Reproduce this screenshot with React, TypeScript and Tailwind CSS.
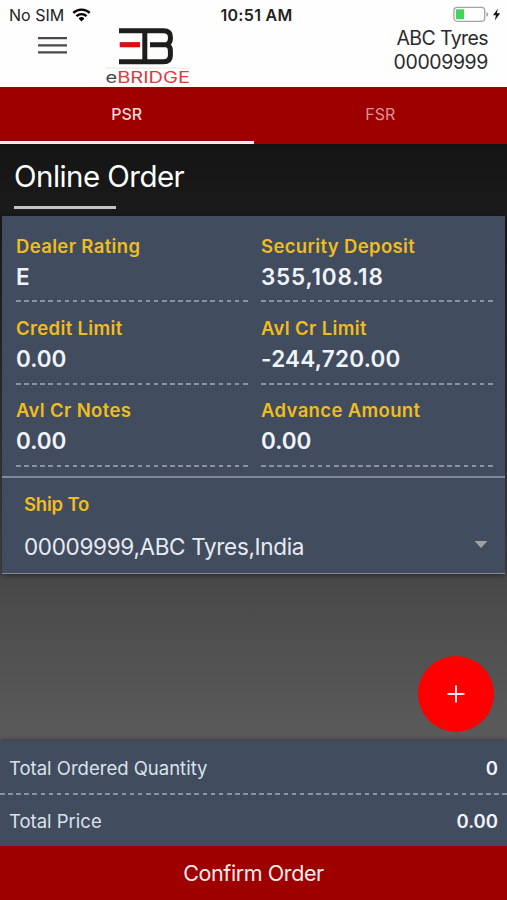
import clsx from "clsx";

interface Field {
    label: string;
    value: string;
    className?: string;
}

const accountFields: Field[] = [
    { label: "Dealer Rating", value: "E" },
    { label: "Security Deposit", value: "355,108.18", className: "tracking-[0.8px]" },
    { label: "Credit Limit", value: "0.00" },
    { label: "Avl Cr Limit", value: "-244,720.00", className: "tracking-[0.25px]" },
    { label: "Avl Cr Notes", value: "0.00" },
    { label: "Advance Amount", value: "0.00" },
];

function DashedLine({ className }: { className?: string }) {
    return (
        <div
            className={clsx(
                "h-[2px] bg-[repeating-linear-gradient(90deg,#8a93a1_0_4.7px,transparent_4.7px_8.1px)]",
                className
            )}
        />
    );
}

function StatusBar() {
    return (
        <div className="grid h-[29px] grid-cols-3 items-center pl-[9px] pr-[6px] pt-px text-[#222]">
            <div className="flex items-center gap-[8px]">
                <span className="text-[16px] leading-[28px]">No SIM</span>
                <svg width="19" height="14" viewBox="0 0 20 15" fill="none" stroke="#000" strokeWidth="2.6">
                    <path d="M1.2 5.3a12.6 12.6 0 0 1 17.6 0" />
                    <path d="M4.6 8.7a7.8 7.8 0 0 1 10.8 0" />
                    <path d="M10 14.4 6.9 11.2a4.5 4.5 0 0 1 6.2 0Z" fill="#000" stroke="none" />
                </svg>
            </div>
            <div className="whitespace-nowrap pl-[3px] text-center text-[16px] font-semibold leading-[28px] tracking-[0.3px]">
                10:51 AM
            </div>
            <div className="-mt-px flex items-center justify-end">
                <svg width="48" height="17" viewBox="0 0 48 17">
                    <rect x="0.9" y="1.3" width="30.8" height="14" rx="3.2" fill="#fff" stroke="#a3a3a3" strokeWidth="1.3" />
                    <rect x="2.9" y="3.3" width="8.2" height="10" rx="0.8" fill="#44d35f" />
                    <path d="M33.4 6v4.8c1.1-.4 1.8-1.3 1.8-2.4s-.7-2-1.8-2.4Z" fill="#a3a3a3" />
                    <path d="M45 2.4 40 9.2h3l-1.2 5.3 5.4-7.3h-3.4Z" fill="#111" />
                </svg>
            </div>
        </div>
    );
}

function Logo() {
    return (
        <svg className="h-[60px] w-[86px]" viewBox="0 0 86 60" fill="none">
            <g stroke="#1d1d1b" strokeWidth="5">
                <path d="M14 4.8H58.500q6.900 0 6.900 6.200v2q0 3.600-3.400 5.700H45" />
                <path d="M62 18.700q3.400 2.100 3.400 5.700v5.200q0 6.200-6.900 6.200H14" />
                <path d="M39.8 4v32" />
            </g>
            <path d="M14.7 18.7H35" stroke="#dc0d10" strokeWidth="5.2" />
            <path d="M0 42h85" stroke="#e8e4e2" strokeWidth="1" />
            {/* Wordmark */}
            <text
                x="0.5"
                y="56.9"
                fontFamily="Inter, sans-serif"
                fontSize="15.5"
                fontWeight="400"
                textLength="84.5"
                lengthAdjust="spacingAndGlyphs"
            >
                <tspan fill="#444">e</tspan>
                <tspan fill="#dc3a40">BRIDGE</tspan>
            </text>
        </svg>
    );
}

function Header() {
    return (
        <header className="h-[87px] bg-[#fefefe]">
            <StatusBar />
            <div className="flex h-[58px] items-start justify-between pl-[38px] pr-[19px]">
                <div className="flex items-start">
                    <svg className="mt-[7px] h-[18px] w-[29px]" viewBox="0 0 29 18" stroke="#4a4a4a" strokeWidth="2.2">
                        <path d="M0 2.2h29M0 9.3h29M0 16.4h29" />
                    </svg>
                    <div className="-mt-[3px] ml-[38px]">
                        <Logo />
                    </div>
                </div>
                <div className="-mt-[3px] text-right text-[19.5px] leading-[24px] text-[#2b2b2b]">
                    <p className="tracking-[-0.6px]">ABC Tyres</p>
                    <p className="tracking-[-0.4px]">00009999</p>
                </div>
            </div>
        </header>
    );
}

function Tabs() {
    return (
        <nav className="grid h-[57px] grid-cols-2 bg-[#9e0000] text-center text-[16px] leading-[54px]">
            <div className="border-b-[3px] border-[#f6eeee] font-medium text-[#f5d9d9]">PSR</div>
            <div className="text-[#dc9494]">FSR</div>
        </nav>
    );
}

function AccountCard() {
    return (
        <section className="mx-[2px] h-[358px] bg-[#424c5f] shadow-[0_1px_5px_rgba(0,0,0,0.5)]">
            <div className="grid h-[260px] grid-cols-[232px_232px] content-start gap-x-[13px] pl-[14px] pt-[18px]">
                {accountFields.map((field) => (
                    <div key={field.label} className="h-[82.2px]">
                        <p className="text-[18.5px] font-semibold leading-[24px] tracking-[0.35px] text-[#efbd1c]">
                            {field.label}
                        </p>
                        <p
                            className={clsx(
                                "mt-[4px] text-[22.5px] font-semibold leading-[30px] text-[#f0f4fa]",
                                field.className
                            )}
                        >
                            {field.value}
                        </p>
                        <DashedLine className="mt-[8.4px]" />
                    </div>
                ))}
            </div>
            <div className="h-[98px] border-b-[1.5px] border-t-2 border-[#818a9a] px-[22px]">
                <p className="mt-[13.5px] text-[18.5px] font-semibold leading-[24px] tracking-[-0.2px] text-[#efbd1c]">
                    Ship To
                </p>
                <div className="mt-[16.5px] flex items-center justify-between">
                    <span className="text-[22.5px] leading-[30px] tracking-[-0.33px] text-[#e6ebf2]">
                        00009999,ABC Tyres,India
                    </span>
                    <svg className="-mr-[5px] -mt-[5px] h-[7px] w-[14px]" viewBox="0 0 14 7" fill="#a0a1a2">
                        <path d="M0.5 0h13L7 7Z" />
                    </svg>
                </div>
            </div>
        </section>
    );
}

function OrderFooter() {
    return (
        <footer>
            <div className="h-[105px] bg-[#424c5f] text-[18.5px] text-[#dbe2eb] shadow-[0_-2px_4px_rgba(0,0,0,0.3)]">
                <div className="flex h-[52px] items-center justify-between px-[9px] pt-[3px]">
                    <span>Total Ordered Quantity</span>
                    <span className="font-semibold text-[#f0f4fa]">0</span>
                </div>
                <DashedLine />
                <div className="flex h-[51px] items-center justify-between px-[9px] pt-[2px]">
                    <span>Total Price</span>
                    <span className="font-semibold text-[#f0f4fa]">0.00</span>
                </div>
            </div>
            <button className="block h-[54px] w-full bg-[#9e0000] pt-px text-[21.5px] tracking-[-0.4px] text-[#fbecec]">
                Confirm Order
            </button>
        </footer>
    );
}

export default function App() {
    return (
        <div className="flex h-[900px] w-[507px] flex-col overflow-hidden font-[Inter,sans-serif]">
            <Header />
            <Tabs />
            <main className="flex flex-1 flex-col bg-[linear-gradient(180deg,#141414_0px,#1b1b1b_72px,#484848_430px,#5b5b5b_597px)]">
                <div className="h-[72px] pl-[14px] pt-[13px]">
                    <h1 className="text-[29.5px] leading-[38px] tracking-[-0.55px] text-white">Online Order</h1>
                    <div className="mt-[11px] h-[3px] w-[102px] bg-[#c4c4c4]" />
                </div>
                <AccountCard />
                <div className="flex flex-1 items-end justify-end pb-[9.5px] pr-[13.5px]">
                    <button className="flex h-[75.5px] w-[75.5px] items-center justify-center rounded-full bg-[#fe0000]">
                        <svg width="18" height="18" viewBox="0 0 18 18" stroke="#ffe6e6" strokeWidth="2">
                            <path d="M9 0.5v17M0.5 9h17" />
                        </svg>
                    </button>
                </div>
            </main>
            <OrderFooter />
        </div>
    );
}
